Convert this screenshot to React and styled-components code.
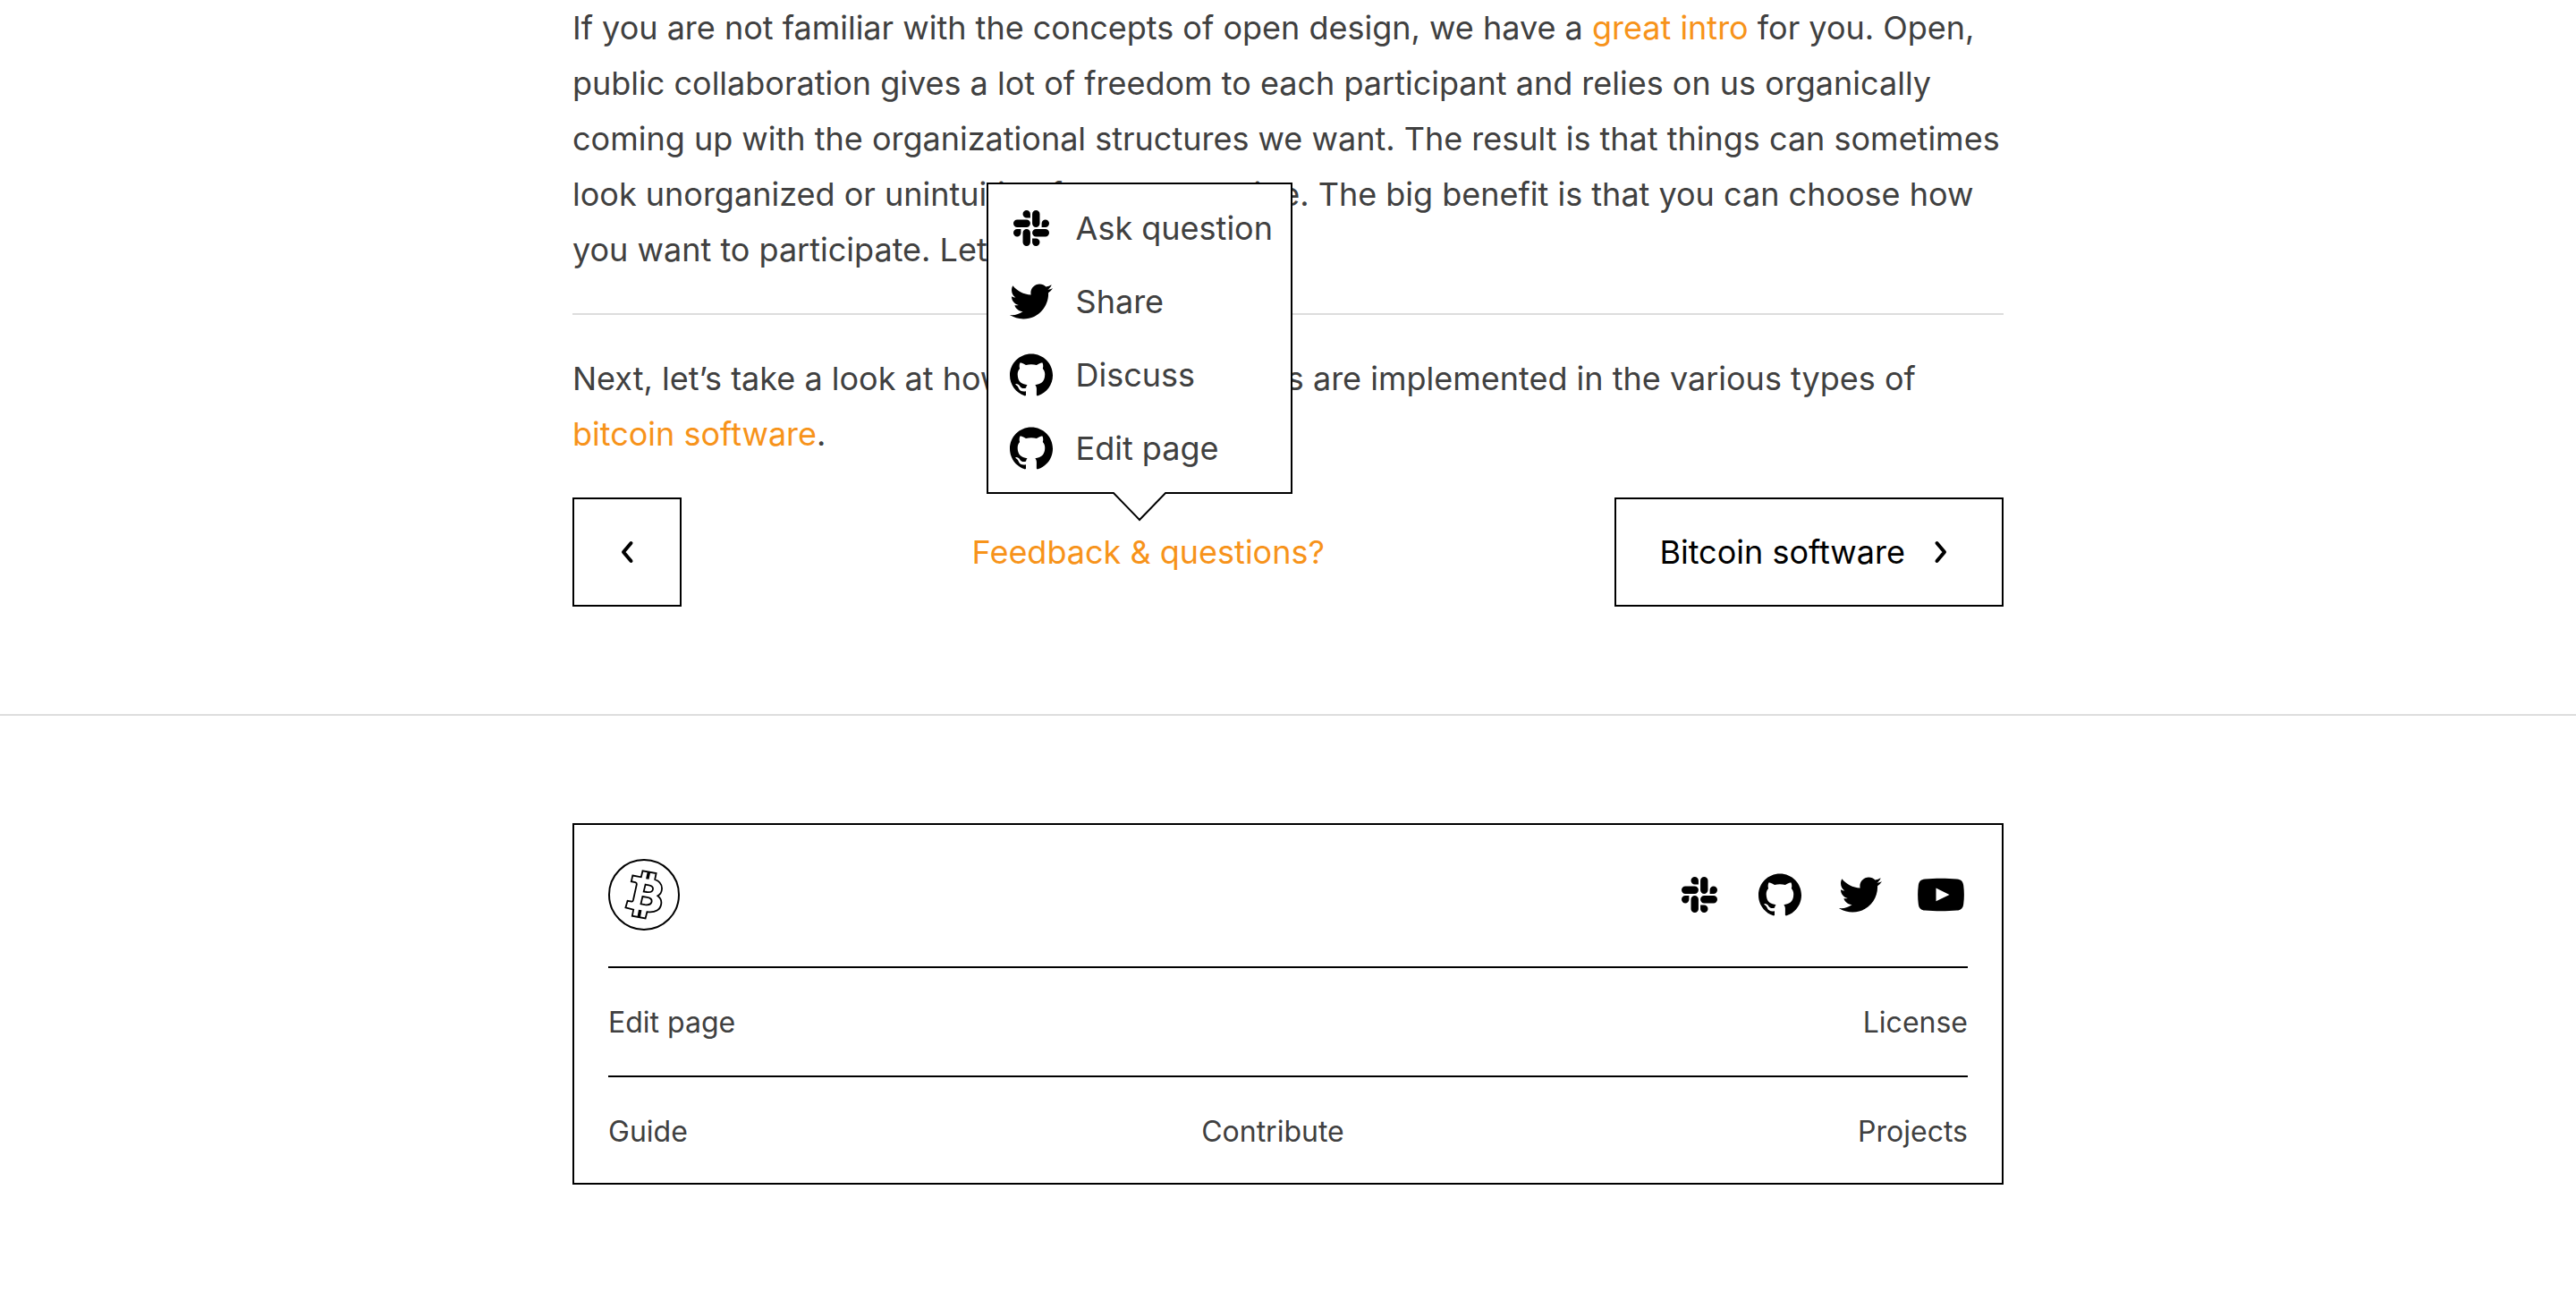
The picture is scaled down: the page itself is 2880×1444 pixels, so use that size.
import React from "react";
import styled, { createGlobalStyle } from "styled-components";
import { FaTwitter } from "react-icons/fa";
import { SiGithub, SiSlack } from "react-icons/si";

const GlobalStyle = createGlobalStyle`
  * { box-sizing: border-box; }
  body {
    margin: 0;
    background: #fff;
    color: #404040;
    font-family: Inter, "Liberation Sans", sans-serif;
    font-size: 36px;
    font-weight: 400;
    line-height: 62px;
  }
  a { color: inherit; text-decoration: none; }
`;

const Column = styled.div`
  width: 100%;
  max-width: 1600px;
  margin: 0 auto;
`;

const Paragraph = styled.p`
  margin: 0;
`;

const InlineLink = styled.a`
  && { color: #f7931a; }
`;

const Divider = styled.hr`
  margin: 40px 0;
  border: 0;
  border-top: 2px solid #ddd;
`;

const Pager = styled.nav`
  display: flex;
  justify-content: space-between;
  align-items: center;
  margin: 40px 0 120px;
`;

const PageLink = styled.a`
  display: flex;
  align-items: center;
  justify-content: center;
  gap: 20px;
  min-width: 122px;
  height: 122px;
  padding: 0 ${(p) => (p.$square ? "0" : "48px")};
  border: 2px solid #000;
  && { color: #000; }
`;

const Chevron = styled.svg`
  width: 40px;
  height: 40px;
  fill: none;
  stroke: #000;
  stroke-width: 4;
  stroke-linecap: round;
  stroke-linejoin: round;
`;

const Feedback = styled.div`
  position: relative;
`;

const FeedbackButton = styled.button`
  padding: 0;
  border: 0;
  background: none;
  color: #f7931a;
  font: inherit;
`;

const Menu = styled.ul`
  position: absolute;
  bottom: 96px;
  left: 16px;
  margin: 0;
  padding: 8px 0;
  list-style: none;
  background: #fff;
  border: 2px solid #000;
`;

const MenuLink = styled.a`
  display: flex;
  align-items: center;
  gap: 26px;
  height: 82px;
  padding: 0 20px 0 24px;
  white-space: nowrap;
`;

const Arrow = styled.svg`
  position: absolute;
  top: 100%;
  left: 50%;
  width: 64px;
  height: 34px;
  transform: translateX(-50%);
`;

const IconBox = styled.span`
  display: flex;
  align-items: center;
  justify-content: center;
  width: ${(p) => (p.$wide ? "60px" : "48px")};
  height: 48px;
  color: #000;
`;

const Footer = styled.footer`
  padding: 120px 0;
  border-top: 2px solid #ddd;
  font-size: 32px;
`;

const FooterCard = styled(Column)`
  padding: 0 38px;
  border: 2px solid #000;
`;

const FooterTop = styled.div`
  display: flex;
  justify-content: space-between;
  align-items: center;
  padding: 38px 0 40px;
`;

const FooterRow = styled.div`
  display: flex;
  justify-content: space-between;
  padding: 30px 0 28px;
  border-top: 2px solid #000;

  &:last-child { padding-bottom: 26px; }
`;

const Social = styled.div`
  display: flex;
  align-items: center;
  gap: 30px;
`;

const Logo = styled.svg`
  display: block;
  width: 80px;
  height: 80px;
  fill: none;
  stroke: #000;
  stroke-width: 2;
`;

const YoutubeIcon = () => (
  <svg width="52" height="38" viewBox="0 0 52 38" fill="currentColor">
    <path
      fillRule="evenodd"
      d="M8 1.4C19 .5 33 .5 44 1.4C48.500 1.800 50.700 4 51.200 8.500C52.100 15.500 52.100 22.500 51.200 29.500C50.700 34 48.500 36.200 44 36.600C33 37.500 19 37.500 8 36.600C3.500 36.200 1.300 34 .8 29.500C-.1 22.500 -.1 15.500 .8 8.500C1.300 4 3.500 1.800 8 1.400ZM20.500 11.500V26.300L35.500 18.900Z"
    />
  </svg>
);

const icons = {
  slack: <SiSlack size={40} />,
  twitter: <FaTwitter size={48} />,
  github: <SiGithub size={48} />,
  youtube: <YoutubeIcon />,
};

const menuItems = [
  ["slack", "Ask question"],
  ["twitter", "Share"],
  ["github", "Discuss"],
  ["github", "Edit page"],
];

const socialItems = [
  ["slack", "Slack"],
  ["github", "GitHub"],
  ["twitter", "Twitter"],
  ["youtube", "YouTube"],
];

export default function App() {
  return (
    <>
      <GlobalStyle />
      <Column as="main">
        <Paragraph>
          If you are not familiar with the concepts of open design, we have a{" "}
          <InlineLink href="#intro">great intro</InlineLink> for you. Open, public
          collaboration gives a lot of freedom to each participant and relies on us
          organically coming up with the organizational structures we want. The result
          is that things can sometimes look unorganized or unintuitive from the
          outside. The big benefit is that you can choose how you want to participate.
          Let’s go.
        </Paragraph>
        <Divider />
        <Paragraph>
          Next, let’s take a look at how these technologies are implemented in the
          various types of <InlineLink href="#software">bitcoin software</InlineLink>.
        </Paragraph>
        <Pager>
          <PageLink $square href="#previous" aria-label="Previous page">
            <Chevron viewBox="0 0 40 40"><path d="M24.500 10 L16 20 L24.500 30" /></Chevron>
          </PageLink>
          <Feedback>
            <FeedbackButton type="button">Feedback &amp; questions?</FeedbackButton>
            <Menu>
              {menuItems.map(([icon, label]) => (
                <li key={label}>
                  <MenuLink href="#feedback"><IconBox>{icons[icon]}</IconBox>{label}</MenuLink>
                </li>
              ))}
              <Arrow as="svg" viewBox="0 0 64 34">
                <path d="M1 -1 L32 31 L63 -1" fill="#fff" stroke="#000" strokeWidth="2" />
              </Arrow>
            </Menu>
          </Feedback>
          <PageLink href="#software">
            Bitcoin software
            <Chevron viewBox="0 0 40 40"><path d="M15.500 10 L24 20 L15.500 30" /></Chevron>
          </PageLink>
        </Pager>
      </Column>
      <Footer>
        <FooterCard>
          <FooterTop>
            <a href="#home" aria-label="Home">
              <Logo viewBox="0 0 80 80">
                <circle cx="40" cy="40" r="39" />
                <path
                  strokeWidth="1.800"
                  d="M27.300 18.500L36.800 20.300L38.500 13.300L53.600 16L52.200 23C57 24.800 60.300 28.500 60 33.500C59.800 37 58 39.800 55.300 41.200C58.500 43.500 59.800 47 59.200 50.500C58.300 56.500 53 60.500 43.400 59.200L41.600 66.500L26.800 63.700L28.200 56.700L19.400 54.400L21.600 46.800L26.300 47.700C27.300 47.800 27.700 47 28 45.800L31.800 28.500C32 27 31.500 26.400 30.300 26.100L25.800 25.200Z"
                />
                <path
                  strokeWidth="1.800"
                  d="M41.600 28.600L45.500 29.300C49 30 50.300 31.600 50 33.800C49.500 36.500 47 37.500 43.300 37L39.700 36.400ZM38.400 42L43.500 42.900C47.300 43.600 49 45.500 48.600 47.800C48 50.700 45 51.700 41 51.100L36.500 50.300Z"
                />
                <path strokeWidth="3.500" d="M45.400 15L43.800 22.500M35.700 57L34.200 65" />
              </Logo>
            </a>
            <Social>
              {socialItems.map(([icon, label]) => (
                <a key={label} href={"#" + icon} aria-label={label}>
                  <IconBox $wide>{icons[icon]}</IconBox>
                </a>
              ))}
            </Social>
          </FooterTop>
          <FooterRow><a href="#edit">Edit page</a><a href="#license">License</a></FooterRow>
          <FooterRow>
            <a href="#guide">Guide</a><a href="#contribute">Contribute</a><a href="#projects">Projects</a>
          </FooterRow>
        </FooterCard>
      </Footer>
    </>
  );
}
